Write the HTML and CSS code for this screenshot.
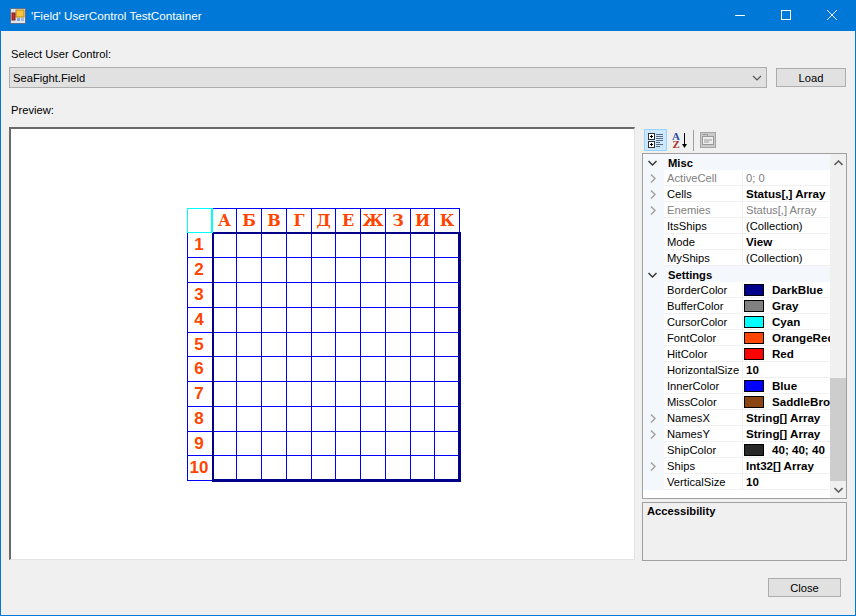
FILE: index.html
```html
<!DOCTYPE html>
<html lang="en">
<head>
    <meta charset="UTF-8">
    <title>'Field' UserControl TestContainer</title>
    <link rel="stylesheet" href="styles.css">
</head>
<body>
<div class="window">
    <div class="titlebar">
        <svg class="app-icon" width="16" height="16" viewBox="0 0 16 16">
            <rect x="0.5" y="0.5" width="15" height="15" fill="#dfe6f2" stroke="#5d6f8f"/>
            <rect x="6" y="2" width="8" height="7" fill="#f5c542" stroke="#b98512"/>
            <rect x="2" y="5" width="3" height="7" fill="#c8312a" stroke="#7d1e1a"/>
            <rect x="7" y="10" width="3" height="3" fill="#7f9fd6"/>
            <rect x="11" y="10" width="3" height="3" fill="#9db7e4"/>
        </svg>
        <span class="title">'Field' UserControl TestContainer</span>
        <div class="caption-buttons">
            <svg width="46" height="30" viewBox="0 0 46 30"><path d="M18 15.5h10" stroke="#fff"/></svg>
            <svg width="46" height="30" viewBox="0 0 46 30"><rect x="18.5" y="10.5" width="9" height="9" fill="none" stroke="#fff"/></svg>
            <svg width="46" height="30" viewBox="0 0 46 30"><path d="M18 10l10 10M28 10l-10 10" stroke="#fff" fill="none"/></svg>
        </div>
    </div>

    <div class="content">
        <div class="label label-select">Select User Control:</div>
        <div class="select-row">
            <div class="combo">
                <span>SeaFight.Field</span>
                <svg width="10" height="6" viewBox="0 0 10 6"><path d="M1 1l4 4 4-4" fill="none" stroke="#555" stroke-width="1.2"/></svg>
            </div>
            <button class="btn btn-load">Load</button>
        </div>
        <div class="label label-preview">Preview:</div>

        <div class="main">
            <div class="preview">
                <div class="field">
                    <div class="corner"></div>
                    <div class="head">А</div><div class="head">Б</div><div class="head">В</div><div class="head">Г</div><div class="head">Д</div><div class="head">Е</div><div class="head">Ж</div><div class="head">З</div><div class="head">И</div><div class="head">К</div>
                    <div class="num">1</div><i></i><i></i><i></i><i></i><i></i><i></i><i></i><i></i><i></i><i></i>
                    <div class="num">2</div><i></i><i></i><i></i><i></i><i></i><i></i><i></i><i></i><i></i><i></i>
                    <div class="num">3</div><i></i><i></i><i></i><i></i><i></i><i></i><i></i><i></i><i></i><i></i>
                    <div class="num">4</div><i></i><i></i><i></i><i></i><i></i><i></i><i></i><i></i><i></i><i></i>
                    <div class="num">5</div><i></i><i></i><i></i><i></i><i></i><i></i><i></i><i></i><i></i><i></i>
                    <div class="num">6</div><i></i><i></i><i></i><i></i><i></i><i></i><i></i><i></i><i></i><i></i>
                    <div class="num">7</div><i></i><i></i><i></i><i></i><i></i><i></i><i></i><i></i><i></i><i></i>
                    <div class="num">8</div><i></i><i></i><i></i><i></i><i></i><i></i><i></i><i></i><i></i><i></i>
                    <div class="num">9</div><i></i><i></i><i></i><i></i><i></i><i></i><i></i><i></i><i></i><i></i>
                    <div class="num">10</div><i></i><i></i><i></i><i></i><i></i><i></i><i></i><i></i><i></i><i></i>
                    <div class="frame"></div>
                </div>
            </div>

            <div class="side">
                <div class="toolbar">
                    <div class="tool tool-active">
                        <svg width="16" height="16" viewBox="0 0 16 16">
                            <rect x="0.5" y="1.5" width="6" height="6" fill="#fff" stroke="#333"/>
                            <path d="M2 4.5h3M3.5 3v3" stroke="#000"/>
                            <rect x="0.5" y="9.5" width="6" height="6" fill="#fff" stroke="#333"/>
                            <path d="M2 12.5h3M3.5 11v3" stroke="#000"/>
                            <path d="M8 2.5h7M8 4.5h7M8 6.5h7M8 8.5h7M8 10.5h4M8 12.5h7M8 14.5h4" stroke="#5a6a80"/>
                        </svg>
                    </div>
                    <div class="tool">
                        <svg class="az-icon" width="16" height="17" viewBox="0 0 16 17">
                            <text class="az az-a" x="0" y="8">A</text>
                            <text class="az az-z" x="0.5" y="16">Z</text>
                            <path d="M12.5 1v13" stroke="#000"/>
                            <path d="M10 12l2.5 4 2.5-4z" fill="#000"/>
                        </svg>
                    </div>
                    <div class="tool-sep"></div>
                    <div class="tool">
                        <svg width="16" height="16" viewBox="0 0 16 16">
                            <rect x="0.5" y="0.5" width="15" height="15" fill="#c9c9c9" stroke="#a6a6a6"/>
                            <rect x="2.5" y="4.5" width="11" height="8" fill="#ececec" stroke="#9a9a9a"/>
                            <path d="M2.5 2.5h5v2M4 8h8M4 10h5" stroke="#9a9a9a" fill="none"/>
                        </svg>
                    </div>
                </div>

                <div class="grid-box">
                    <div class="props">
                        <div class="cat"><svg class="chev" width="9" height="6" viewBox="0 0 9 6"><path d="M0.5 1l4 4 4-4" fill="none" stroke="#333" stroke-width="1.4"/></svg>Misc</div>
                        <div class="prop off"><span class="gut"><svg width="6" height="9" viewBox="0 0 6 9"><path d="M1 .5l4 4-4 4" fill="none" stroke="#a0a0a0" stroke-width="1.4"/></svg></span><span class="name">ActiveCell</span><span class="val">0; 0</span></div>
                        <div class="prop"><span class="gut"><svg width="6" height="9" viewBox="0 0 6 9"><path d="M1 .5l4 4-4 4" fill="none" stroke="#a0a0a0" stroke-width="1.4"/></svg></span><span class="name">Cells</span><span class="val bold">Status[,] Array</span></div>
                        <div class="prop off"><span class="gut"><svg width="6" height="9" viewBox="0 0 6 9"><path d="M1 .5l4 4-4 4" fill="none" stroke="#a0a0a0" stroke-width="1.4"/></svg></span><span class="name">Enemies</span><span class="val">Status[,] Array</span></div>
                        <div class="prop"><span class="gut"></span><span class="name">ItsShips</span><span class="val">(Collection)</span></div>
                        <div class="prop"><span class="gut"></span><span class="name">Mode</span><span class="val bold">View</span></div>
                        <div class="prop"><span class="gut"></span><span class="name">MyShips</span><span class="val">(Collection)</span></div>
                        <div class="cat"><svg class="chev" width="9" height="6" viewBox="0 0 9 6"><path d="M0.5 1l4 4 4-4" fill="none" stroke="#333" stroke-width="1.4"/></svg>Settings</div>
                        <div class="prop"><span class="gut"></span><span class="name">BorderColor</span><span class="val bold"><b class="swatch sw-darkblue"></b>DarkBlue</span></div>
                        <div class="prop"><span class="gut"></span><span class="name">BufferColor</span><span class="val bold"><b class="swatch sw-gray"></b>Gray</span></div>
                        <div class="prop"><span class="gut"></span><span class="name">CursorColor</span><span class="val bold"><b class="swatch sw-cyan"></b>Cyan</span></div>
                        <div class="prop"><span class="gut"></span><span class="name">FontColor</span><span class="val bold"><b class="swatch sw-orange"></b>OrangeRed</span></div>
                        <div class="prop"><span class="gut"></span><span class="name">HitColor</span><span class="val bold"><b class="swatch sw-red"></b>Red</span></div>
                        <div class="prop"><span class="gut"></span><span class="name">HorizontalSize</span><span class="val bold">10</span></div>
                        <div class="prop"><span class="gut"></span><span class="name">InnerColor</span><span class="val bold"><b class="swatch sw-blue"></b>Blue</span></div>
                        <div class="prop"><span class="gut"></span><span class="name">MissColor</span><span class="val bold"><b class="swatch sw-brown"></b>SaddleBrown</span></div>
                        <div class="prop"><span class="gut"><svg width="6" height="9" viewBox="0 0 6 9"><path d="M1 .5l4 4-4 4" fill="none" stroke="#a0a0a0" stroke-width="1.4"/></svg></span><span class="name">NamesX</span><span class="val bold">String[] Array</span></div>
                        <div class="prop"><span class="gut"><svg width="6" height="9" viewBox="0 0 6 9"><path d="M1 .5l4 4-4 4" fill="none" stroke="#a0a0a0" stroke-width="1.4"/></svg></span><span class="name">NamesY</span><span class="val bold">String[] Array</span></div>
                        <div class="prop"><span class="gut"></span><span class="name">ShipColor</span><span class="val bold"><b class="swatch sw-ship"></b>40; 40; 40</span></div>
                        <div class="prop"><span class="gut"><svg width="6" height="9" viewBox="0 0 6 9"><path d="M1 .5l4 4-4 4" fill="none" stroke="#a0a0a0" stroke-width="1.4"/></svg></span><span class="name">Ships</span><span class="val bold">Int32[] Array</span></div>
                        <div class="prop"><span class="gut"></span><span class="name">VerticalSize</span><span class="val bold">10</span></div>
                    </div>
                    <div class="scrollbar">
                        <div class="arrow"><svg width="9" height="6" viewBox="0 0 9 6"><path d="M0.5 5l4-4 4 4" fill="none" stroke="#606060" stroke-width="1.6"/></svg></div>
                        <div class="track"><div class="thumb"></div></div>
                        <div class="arrow"><svg width="9" height="6" viewBox="0 0 9 6"><path d="M0.5 1l4 4 4-4" fill="none" stroke="#606060" stroke-width="1.6"/></svg></div>
                    </div>
                </div>

                <div class="help">Accessibility</div>
            </div>
        </div>

        <div class="footer">
            <button class="btn btn-close">Close</button>
        </div>
    </div>
</div>
</body>
</html>
```

FILE: styles.css
```css
* {
    box-sizing: border-box;
}

html, body {
    margin: 0;
    padding: 0;
}

body {
    width: 856px;
    height: 616px;
    overflow: hidden;
    font-family: "Liberation Sans", Arial, sans-serif;
    font-size: 11.2px;
    color: #000;
}

.window {
    width: 856px;
    height: 616px;
    display: flex;
    flex-direction: column;
    background: #f0f0f0;
    border: 1px solid #0078d7;
    border-top: 0;
}

/* title bar */
.titlebar {
    height: 31px;
    margin: 0 -1px;
    flex: none;
    display: flex;
    align-items: center;
    background: #0078d7;
    color: #fff;
    padding-left: 10px;
}

.app-icon {
    margin-right: 5px;
}

.title {
    font-size: 11.7px;
    margin-top: -1px;
}

.caption-buttons {
    margin-left: auto;
    display: flex;
    align-self: flex-start;
    margin-right: 1px;
}

.caption-buttons svg {
    display: block;
}

/* top controls */
.content {
    flex: 1;
    display: flex;
    flex-direction: column;
    padding: 0 8px;
}

.label {
    height: 14px;
    line-height: 14px;
    padding-left: 2px;
}

.label-select {
    margin-top: 16px;
}

.select-row {
    display: flex;
    align-items: center;
    margin-top: 6px;
}

.combo {
    width: 758px;
    height: 21px;
    padding: 0 4px 0 3px;
    display: flex;
    align-items: center;
    justify-content: space-between;
    background: #e1e1e1;
    border: 1px solid #adadad;
}

.btn {
    font: inherit;
    color: #000;
    background: #e1e1e1;
    border: 1px solid #adadad;
    padding: 0;
    border-radius: 0;
}

.btn-load {
    width: 70px;
    height: 19px;
    margin-left: 9px;
}

.label-preview {
    margin-top: 15px;
}

/* preview + property grid */
.main {
    display: flex;
    margin-top: 10px;
}

.preview {
    width: 626px;
    height: 433px;
    background: #fff;
    border-style: solid;
    border-width: 2px 1px 1px 2px;
    border-color: #696969 #e3e3e3 #e3e3e3 #696969;
    padding: 79px 0 0 176px;
}

.field {
    position: relative;
    width: 273px;
    display: grid;
    grid-template-columns: 25px 24px 25px 25px 25px 24px 25px 25px 25px 24px 25px;
    grid-template-rows: 24px 25px 25px 25px 25px 24px 25px 25px 25px 24px 25px;
    border-right: 1px solid #00f;
    border-bottom: 1px solid #00f;
}

.field i,
.head,
.num {
    display: block;
    border-left: 1px solid #00f;
    border-top: 1px solid #00f;
}

/* cursor cell sits on top of the neighbouring lines */
.corner {
    position: relative;
    z-index: 1;
    width: 26px;
    height: 25px;
    border: 1px solid #0ff;
    border-right-width: 2px;
}

.head {
    font-family: "DejaVu Serif", serif;
    font-weight: bold;
    font-size: 16px;
    line-height: 23px;
    text-align: center;
    color: #ff4500;
    overflow: hidden;
}

.num {
    font-weight: bold;
    font-size: 17px;
    line-height: 23px;
    text-align: center;
    color: #ff4500;
    padding-right: 2px;
}

/* thick border over the play area */
.frame {
    position: absolute;
    left: 25px;
    top: 24px;
    width: 249px;
    height: 250px;
    border: 3px solid #00008b;
    border-left-width: 2px;
    border-top-width: 2px;
}

.side {
    width: 205px;
    margin-left: 7px;
    display: flex;
    flex-direction: column;
}

.toolbar {
    height: 26px;
    display: flex;
    align-items: center;
    padding-left: 2px;
}

.tool {
    width: 23px;
    height: 22px;
    display: flex;
    align-items: center;
    justify-content: center;
    margin-right: 1px;
    border: 1px solid transparent;
}

.tool-active {
    background: #cce8ff;
    border-color: #99d1ff;
}

.tool-sep {
    width: 1px;
    height: 21px;
    background: #a0a0a0;
    margin: 0 2px 0 1px;
}

.az-icon {
    overflow: visible;
}

.az {
    font-family: "Liberation Serif", serif;
    font-weight: bold;
    font-size: 11px;
}

.az-a {
    fill: #2a4fa8;
}

.az-z {
    fill: #a8322a;
}

.grid-box {
    height: 346px;
    display: flex;
    background: #fff;
    border: 1px solid #a0a0a0;
    margin-bottom: 3px;
}

.props {
    width: 187px;
    flex: none;
    overflow: hidden;
}

.cat {
    height: 16px;
    display: flex;
    align-items: center;
    background: #f4f7fc;
    font-weight: bold;
    padding-left: 5px;
    padding-top: 1px;
}

.chev {
    margin-right: 11px;
}

.prop {
    height: 16px;
    display: flex;
    line-height: 16px;
    white-space: nowrap;
}

.gut {
    width: 21px;
    flex: none;
    background: #f4f7fc;
    display: flex;
    align-items: center;
    padding-left: 7px;
}

.name {
    width: 79px;
    flex: none;
    padding-left: 3px;
    border-right: 1px solid #f0f0f0;
    border-bottom: 1px solid #f0f0f0;
    overflow: hidden;
}

.val {
    flex: 1;
    min-width: 0;
    padding-left: 3px;
    border-bottom: 1px solid #f0f0f0;
    overflow: hidden;
    display: flex;
    align-items: center;
}

.off .name,
.off .val {
    color: #808080;
}

.bold {
    font-weight: bold;
    font-size: 11.6px;
}

.swatch {
    width: 20px;
    height: 12px;
    flex: none;
    margin: 0 8px 0 -2px;
    border: 1px solid #000;
}

.sw-darkblue { background: #00008b; }
.sw-gray { background: #808080; }
.sw-cyan { background: #0ff; }
.sw-orange { background: #ff4500; }
.sw-red { background: #f00; }
.sw-blue { background: #00f; }
.sw-brown { background: #8b4513; }
.sw-ship { background: #282828; }

.scrollbar {
    width: 16px;
    flex: none;
    display: flex;
    flex-direction: column;
    background: #f0f0f0;
}

.arrow {
    height: 17px;
    flex: none;
    display: flex;
    align-items: center;
    justify-content: center;
}

.track {
    flex: 1;
    display: flex;
    flex-direction: column;
    justify-content: flex-end;
}

.thumb {
    height: 103px;
    background: #cdcdcd;
}

.help {
    height: 59px;
    border: 1px solid #a0a0a0;
    font-weight: bold;
    padding: 2px 4px;
}

.footer {
    display: flex;
    justify-content: flex-end;
    margin-top: 17px;
    padding-right: 6px;
}

.btn-close {
    width: 73px;
    height: 19px;
}
```
